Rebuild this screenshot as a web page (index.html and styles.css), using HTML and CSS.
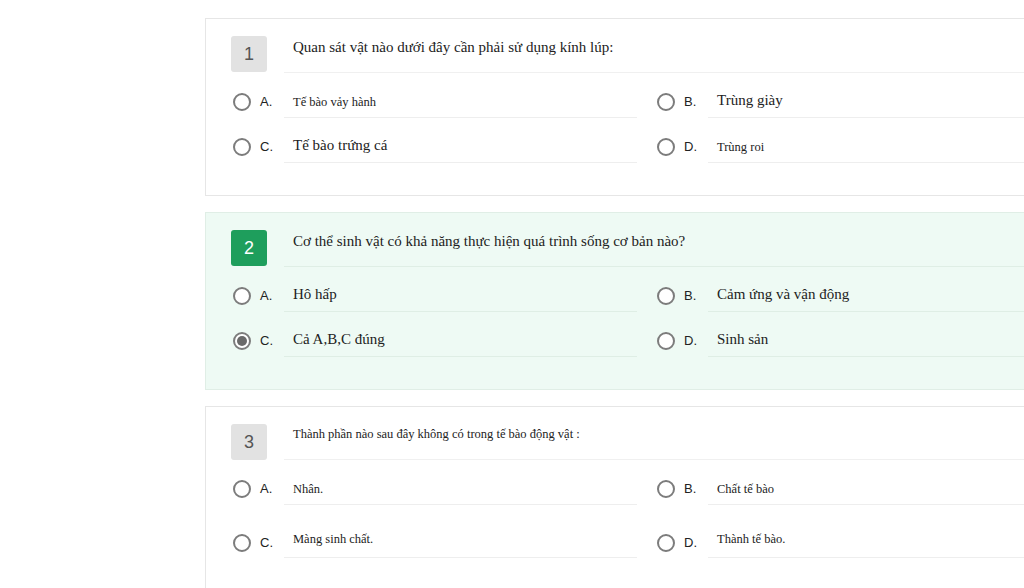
FILE: index.html
```html
<!DOCTYPE html>
<html lang="vi">
<head>
    <meta charset="UTF-8">
    <title>Bài kiểm tra</title>
    <link rel="stylesheet" href="styles.css">
</head>
<body>
    <div class="quiz">
        <div class="question">
            <div class="q-head">
                <span class="q-num">1</span>
                <div class="q-text">Quan sát vật nào dưới đây cần phải sử dụng kính lúp:</div>
            </div>
            <div class="answers">
                <div class="answer"><span class="radio"></span><span class="key">A.</span><div class="a-text small">Tế bào vảy hành</div></div>
                <div class="answer"><span class="radio"></span><span class="key">B.</span><div class="a-text">Trùng giày</div></div>
                <div class="answer"><span class="radio"></span><span class="key">C.</span><div class="a-text">Tế bào trứng cá</div></div>
                <div class="answer"><span class="radio"></span><span class="key">D.</span><div class="a-text small">Trùng roi</div></div>
            </div>
        </div>

        <div class="question done">
            <div class="q-head">
                <span class="q-num">2</span>
                <div class="q-text">Cơ thể sinh vật có khả năng thực hiện quá trình sống cơ bản nào?</div>
            </div>
            <div class="answers">
                <div class="answer"><span class="radio"></span><span class="key">A.</span><div class="a-text">Hô hấp</div></div>
                <div class="answer"><span class="radio"></span><span class="key">B.</span><div class="a-text">Cảm ứng và vận động</div></div>
                <div class="answer"><span class="radio checked"></span><span class="key">C.</span><div class="a-text">Cả A,B,C đúng</div></div>
                <div class="answer"><span class="radio"></span><span class="key">D.</span><div class="a-text">Sinh sản</div></div>
            </div>
        </div>

        <div class="question tall">
            <div class="q-head">
                <span class="q-num">3</span>
                <div class="q-text small">Thành phần nào sau đây không có trong tế bào động vật :</div>
            </div>
            <div class="answers">
                <div class="answer"><span class="radio"></span><span class="key">A.</span><div class="a-text small">Nhân.</div></div>
                <div class="answer"><span class="radio"></span><span class="key">B.</span><div class="a-text small">Chất tế bào</div></div>
                <div class="answer"><span class="radio"></span><span class="key">C.</span><div class="a-text small">Màng sinh chất.</div></div>
                <div class="answer"><span class="radio"></span><span class="key">D.</span><div class="a-text small">Thành tế bào.</div></div>
            </div>
        </div>
    </div>
</body>
</html>
```

FILE: styles.css
```css
body { margin: 0; background: #fff; overflow: hidden; font-family: "Liberation Serif", "Times New Roman", serif; color: #222; }
.quiz { padding: 18px 0 0 205px; display: flex; flex-direction: column; gap: 16px; width: 880px; }
.question { border: 1px solid #e6e6e6; background: #fff; padding: 17px 25px 32px 25px; }
.question.done { background: #eefaf4; border-color: #e0eee6; }

.q-head { display: flex; align-items: flex-start; gap: 17px; }
.q-num { width: 36px; height: 36px; flex: none; border-radius: 3px; background: #e2e2e2; color: #555; font: 18px "Liberation Sans", Arial, sans-serif; display: flex; align-items: center; justify-content: center; }
.done .q-num { background: #1e9e5c; color: #fff; }
.q-text { flex: 1; height: 35px; border-bottom: 1px solid #f0f0f0; padding: 1px 0 0 9px; font-size: 15px; line-height: 20px; }
.q-text.small { font-size: 12.5px; padding-top: 0; }

.answers { display: grid; grid-template-columns: 404px 404px; column-gap: 20px; padding-left: 2px; }
.answer { display: flex; align-items: center; height: 45px; }
.radio { width: 18px; height: 18px; flex: none; box-sizing: border-box; border: 2px solid #7c7c7c; border-radius: 50%; margin: 12px 9px 0 0; background: #fff; position: relative; }
.radio.checked::after { content: ""; position: absolute; left: 2px; top: 2px; width: 10px; height: 10px; border-radius: 50%; background: #6a6a6a; }
.key { width: 24px; flex: none; margin-top: 12px; font: 13px "Liberation Sans", Arial, sans-serif; color: #222; }
.a-text { flex: 1; align-self: stretch; box-sizing: border-box; border-bottom: 1px solid #eeeeee; padding: 17px 0 0 9px; font-size: 15px; line-height: 20px; }
.a-text.small { font-size: 12.5px; padding-top: 19px; }
.done .a-text, .done .q-text { border-bottom-color: #dfeee5; }

.tall .answer:nth-child(n+3) { height: 53px; }
.tall .answer:nth-child(n+3) .radio,
.tall .answer:nth-child(n+3) .key { margin-top: 22px; }
.tall .answer:nth-child(n+3) .a-text { padding-top: 24px; }
```
